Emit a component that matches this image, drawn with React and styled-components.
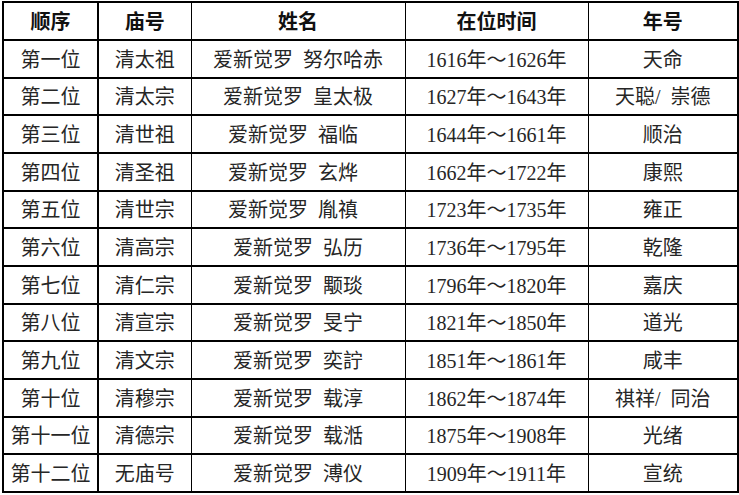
import React from "react";
import styled, { createGlobalStyle } from "styled-components";

const Global = createGlobalStyle`
  html, body { margin: 0; padding: 0; background: #fff; }
  body { font-family: "Liberation Serif", "Noto Sans CJK SC", serif; }
`;

const Page = styled.div`
  padding: 1px 0 0 2px;
  width: 739px;
  height: 495px;
  box-sizing: border-box;
  overflow: hidden;
`;

const Table = styled.table`
  border-collapse: collapse;
  table-layout: fixed;
  width: 735px;
  border: 2px solid #000;
`;

const HeadCell = styled.th`
  height: 38px;
  box-sizing: border-box;
  padding: 0;
  border-top: 2px solid #000;
  border-bottom: 2px solid #000;
  border-left: ${(p) => (p.$first || p.$thick ? "2px" : "1px")} solid #000;
  border-right: ${(p) => (p.$last ? "2px" : "1px")} solid #000;
  font-family: "Noto Sans CJK SC", sans-serif;
  font-weight: 700;
  font-size: 20px;
  color: #111;
  text-align: center;
  vertical-align: middle;
  line-height: 1;
`;

const Cell = styled.td`
  height: 37.67px;
  padding: 2px 0 0;
  box-sizing: border-box;
  border-top: 2px solid #000;
  border-bottom: 2px solid #000;
  border-left: ${(p) => (p.$first || p.$thick ? "2px" : "1px")} solid #000;
  border-right: ${(p) => (p.$last ? "2px" : "1px")} solid #000;
  font-family: "Liberation Serif", "Noto Sans CJK SC", serif;
  font-weight: 400;
  font-size: 20px;
  color: #262626;
  text-align: center;
  vertical-align: middle;
  line-height: 1;
  white-space: pre;
`;

const headers = ["顺序", "庙号", "姓名", "在位时间", "年号"];
const widths = [95, 93, 214, 183, 150];

const sp = "\u00a0\u00a0";
const rows = [
  ["第一位", "清太祖", `爱新觉罗${sp}努尔哈赤`, "1616年～1626年", `天命`],
  ["第二位", "清太宗", `爱新觉罗${sp}皇太极`, "1627年～1643年", `天聪/${sp}崇德`],
  ["第三位", "清世祖", `爱新觉罗${sp}福临${sp}`, "1644年～1661年", "顺治"],
  ["第四位", "清圣祖", `爱新觉罗${sp}玄烨${sp}`, "1662年～1722年", "康熙"],
  ["第五位", "清世宗", `爱新觉罗${sp}胤禛${sp}`, "1723年～1735年", "雍正"],
  ["第六位", "清高宗", `爱新觉罗${sp}弘历`, "1736年～1795年", "乾隆"],
  ["第七位", "清仁宗", `爱新觉罗${sp}颙琰`, "1796年～1820年", "嘉庆"],
  ["第八位", "清宣宗", `爱新觉罗${sp}旻宁`, "1821年～1850年", "道光"],
  ["第九位", "清文宗", `爱新觉罗${sp}奕詝`, "1851年～1861年", "咸丰"],
  ["第十位", "清穆宗", `爱新觉罗${sp}载淳`, "1862年～1874年", `祺祥/${sp}同治`],
  ["第十一位", "清德宗", `爱新觉罗${sp}载湉`, "1875年～1908年", "光绪"],
  ["第十二位", "无庙号", `爱新觉罗${sp}溥仪`, "1909年～1911年", "宣统"],
];

export default function App() {
  return (
    <Page>
      <Global />
      <Table>
        <colgroup>
          {widths.map((w, i) => (
            <col key={i} style={{ width: w }} />
          ))}
        </colgroup>
        <thead>
          <tr>
            {headers.map((h, i) => (
              <HeadCell key={h} $first={i === 0} $thick={i === 1} $last={i === 4}>
                {h}
              </HeadCell>
            ))}
          </tr>
        </thead>
        <tbody>
          {rows.map((r, ri) => (
            <tr key={ri}>
              {r.map((c, ci) => (
                <Cell key={ci} $first={ci === 0} $thick={ci === 1} $last={ci === 4}>
                  {c}
                </Cell>
              ))}
            </tr>
          ))}
        </tbody>
      </Table>
    </Page>
  );
}
